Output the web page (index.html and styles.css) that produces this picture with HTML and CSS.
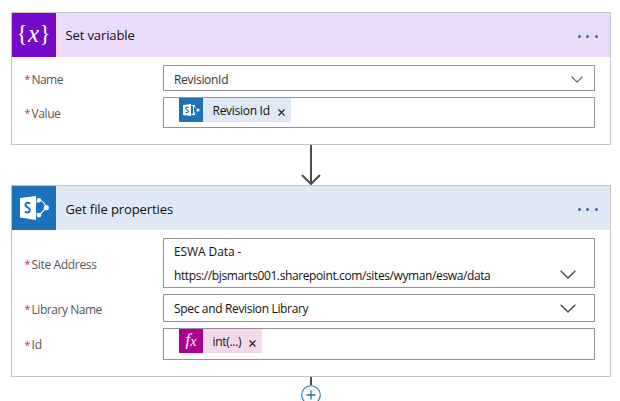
FILE: index.html
```html
<!DOCTYPE html>
<html lang="en">
<head>
<meta charset="utf-8">
<title>Flow designer</title>
<link rel="stylesheet" href="styles.css">
</head>
<body>
<svg class="defs" width="0" height="0" aria-hidden="true">
  <symbol id="sharepoint" viewBox="0 0 44 44">
    <path d="M27 14Q31.500 14.500 34.500 21.500L27 29.500M24.500 16.500L27 14M24.500 27L27 29.500" fill="none" stroke="#fff" stroke-width="1.100"/>
    <circle cx="27" cy="14.300" r="2.200" fill="#fff"/><circle cx="34.300" cy="21.700" r="2.600" fill="#fff"/><circle cx="27" cy="29.300" r="2.300" fill="#fff"/>
    <path d="M8 12L24 10V34L8 31.500Z" fill="#fff"/>
    <path d="M18.300 17.300Q13.400 15.700 13.400 18.800Q13.400 20.300 15.500 21.300Q17.900 22.300 17.900 24.100Q17.900 27.600 12.800 25.800" fill="none" stroke="#1b72ba" stroke-width="2"/>
  </symbol>
  <symbol id="sharepoint-small" viewBox="0 0 24 24">
    <path d="M4 7L12 6V18L4 17Z" fill="#fff"/>
    <path d="M9.500 9.500Q6.800 8.500 6.800 10.300Q6.800 11.200 8 11.700Q9.300 12.300 9.300 13.300Q9.300 15.200 6.500 14.200" fill="none" stroke="#1b72ba" stroke-width="1.100"/>
    <path d="M12.500 7.500H14.500V16.500H12.500" fill="none" stroke="#fff" stroke-width="1"/>
    <circle cx="15" cy="8" r="1.200" fill="#fff"/><circle cx="19" cy="12" r="1.500" fill="#fff"/><circle cx="15" cy="16" r="1.200" fill="#fff"/>
    <path d="M15 8L19 12L15 16" fill="none" stroke="#fff" stroke-width=".8" stroke-dasharray="1 1"/>
  </symbol>
  <symbol id="chevron" viewBox="0 0 16 9"><path d="M.7.7L8 8L15.300.7" fill="none" stroke="#484850" stroke-width="1.400"/></symbol>
  <symbol id="close" viewBox="0 0 7 7"><path d="M.5.5L6.500 6.500M6.500.5L.5 6.500" stroke="#222" stroke-width="1.200"/></symbol>
</svg>
<main class="flow">
  <section class="card card-variable">
    <header class="head violet">
      <div class="tile purple braces"><span>{</span><i>x</i><span>}</span></div>
      <h2 class="title-a">Set variable</h2>
      <div class="dots"><b></b><b></b><b></b></div>
    </header>
    <div class="fields">
      <div class="row h26"><label><em>*</em><span class="l-name">Name</span></label><div class="box light"><span class="t-revid">RevisionId</span><svg class="chev small"><use href="#chevron"/></svg></div></div>
      <div class="row h31"><label><em>*</em><span class="l-value">Value</span></label><div class="box tokens"><div class="token blue"><svg class="mini"><use href="#sharepoint-small"/></svg><span class="t-token">Revision Id</span><svg class="close"><use href="#close"/></svg></div></div></div>
    </div>
  </section>
  <svg class="arrow" viewBox="0 0 20 40"><path d="M10 0V39M1 30L10 39L19 30" fill="none" stroke="#4b4b4b" stroke-width="2"/></svg>
  <section class="card card-file">
    <header class="head sky">
      <div class="tile azure"><svg width="44" height="44"><use href="#sharepoint"/></svg></div>
      <h2 class="title-b">Get file properties</h2>
      <div class="dots"><b></b><b></b><b></b></div>
    </header>
    <div class="fields">
      <div class="row h50"><label><em>*</em><span class="l-site">Site Address</span></label><div class="box address"><p><span class="t-eswa">ESWA Data -</span><br><span class="t-url">https://bjsmarts001.sharepoint.com/sites/wyman/eswa/data</span></p><svg class="chev"><use href="#chevron"/></svg></div></div>
      <div class="row h28"><label><em>*</em><span class="l-lib">Library Name</span></label><div class="box"><span class="t-lib">Spec and Revision Library</span><svg class="chev"><use href="#chevron"/></svg></div></div>
      <div class="row h32"><label><em>*</em><span>Id</span></label><div class="box tokens"><div class="token pink"><div class="fx"><i>f</i><i class="sub">x</i></div><span class="t-int">int(...)</span><svg class="close"><use href="#close"/></svg></div></div></div>
    </div>
  </section>
  <div class="stem"></div>
  <svg class="add" viewBox="0 0 20 20"><circle cx="10" cy="10" r="9.300" fill="#fff" stroke="#2878b8" stroke-width="1.100"/><path d="M10 5.500V14.500M5.500 10H14.500" stroke="#1b72ba" stroke-width="1.300"/></svg>
</main>
</body>
</html>
```

FILE: styles.css
```css
* { box-sizing: border-box; }
html, body { margin: 0; height: 401px; overflow: hidden; background: #fff; }
body { font-family: "Open Sans", "Noto Sans", sans-serif; font-size: 12px; color: #111; }
.defs { position: absolute; }
.flow { display: flex; flex-direction: column; align-items: center; width: 600px; margin: 0 0 0 11px; padding-top: 12px; }
.card { width: 600px; flex: none; border: 1px solid #c3c3c3; background: #fff; }
.card-variable { height: 133px; }
.card-file { height: 192px; }
.head { display: flex; align-items: center; height: 44px; }
.violet { background: #ebdaf9; }
.sky { background: #dee9f5; }
.tile { display: flex; width: 44px; height: 44px; flex: none; }
.purple { background: #750acb; }
.azure { background: #1b72ba; }
.braces { justify-content: center; align-items: center; color: #fff; font-family: "Liberation Serif", serif; font-size: 23px; line-height: 40px; padding-bottom: 2px; padding-right: 1px; }
.braces i { font-size: 25px; margin: 0 .5px; }
h2 { margin: 0 0 0 9.5px; font-size: 13px; font-weight: 400; line-height: 20px; white-space: nowrap; }
.title-a { letter-spacing: -.12px; }
.title-b { letter-spacing: -.1px; padding-top: 2px; }
.dots { display: flex; gap: 5.5px; margin: 3px 12.5px 0 auto; }
.dots b { width: 3px; height: 3px; border-radius: 50%; background: #2f68b5; }
.fields { display: flex; flex-direction: column; gap: 6px; padding: 8px 15px 0 12px; }
.row { display: flex; }
.h26 { height: 26px; }
.h31 { height: 31px; }
.h50 { height: 50px; }
.h28 { height: 28px; }
.h32 { height: 32px; }
label { display: flex; align-items: center; width: 139px; flex: none; color: #555; white-space: nowrap; padding-top: 1px; }
.h26 label, .h50 label, .h28 label { padding-top: 2px; }
label em { width: 7.5px; padding-left: .5px; font-style: normal; font-size: 10.5px; color: #d3203a; }
.l-name { letter-spacing: -.55px; }
.l-value { letter-spacing: -.4px; }
.l-site { letter-spacing: -.33px; }
.l-lib { letter-spacing: -.45px; }
.t-revid { letter-spacing: -.3px; padding-top: 2px; }
.t-token { letter-spacing: -.28px; padding-top: 1px; }
.t-eswa { letter-spacing: -.1px; }
.t-url { letter-spacing: -.39px; }
.t-lib { letter-spacing: -.34px; }
.t-int { letter-spacing: -.3px; padding-top: 1px; }
.box { display: flex; align-items: center; flex: 1; min-width: 0; border: 1px solid #929292; padding-left: 10px; white-space: nowrap; }
.light { color: #333; }
.box p { margin: 0; line-height: 24px; padding-top: 2px; }
.chev { width: 16px; height: 9px; margin-left: auto; margin-right: 18px; flex: none; }
.small { width: 12px; height: 7px; margin-right: 11px; margin-top: 3px; }
.address .chev { align-self: flex-end; margin-bottom: 8px; }
.tokens { align-items: flex-start; padding-left: 15px; }
.token { display: flex; align-items: center; height: 24px; }
.blue { background: #dee9f5; width: 112px; }
.pink { background: #f2daed; width: 83px; }
.mini { width: 24px; height: 24px; background: #1b72ba; margin-right: 9.5px; flex: none; }
.fx { display: flex; justify-content: center; width: 24px; height: 24px; background: #ab008b; color: #fff; margin-right: 9.5px; flex: none; font: 17px/22px "Liberation Serif", serif; }
.sub { font-size: 14px; line-height: 25px; }
.close { width: 7px; height: 7px; margin: 4px 6.5px 0 auto; flex: none; }
.arrow { width: 20px; height: 40px; flex: none; }
.stem { width: 2px; height: 8px; background: #4b4b4b; flex: none; }
.add { width: 20px; height: 20px; flex: none; }
```
